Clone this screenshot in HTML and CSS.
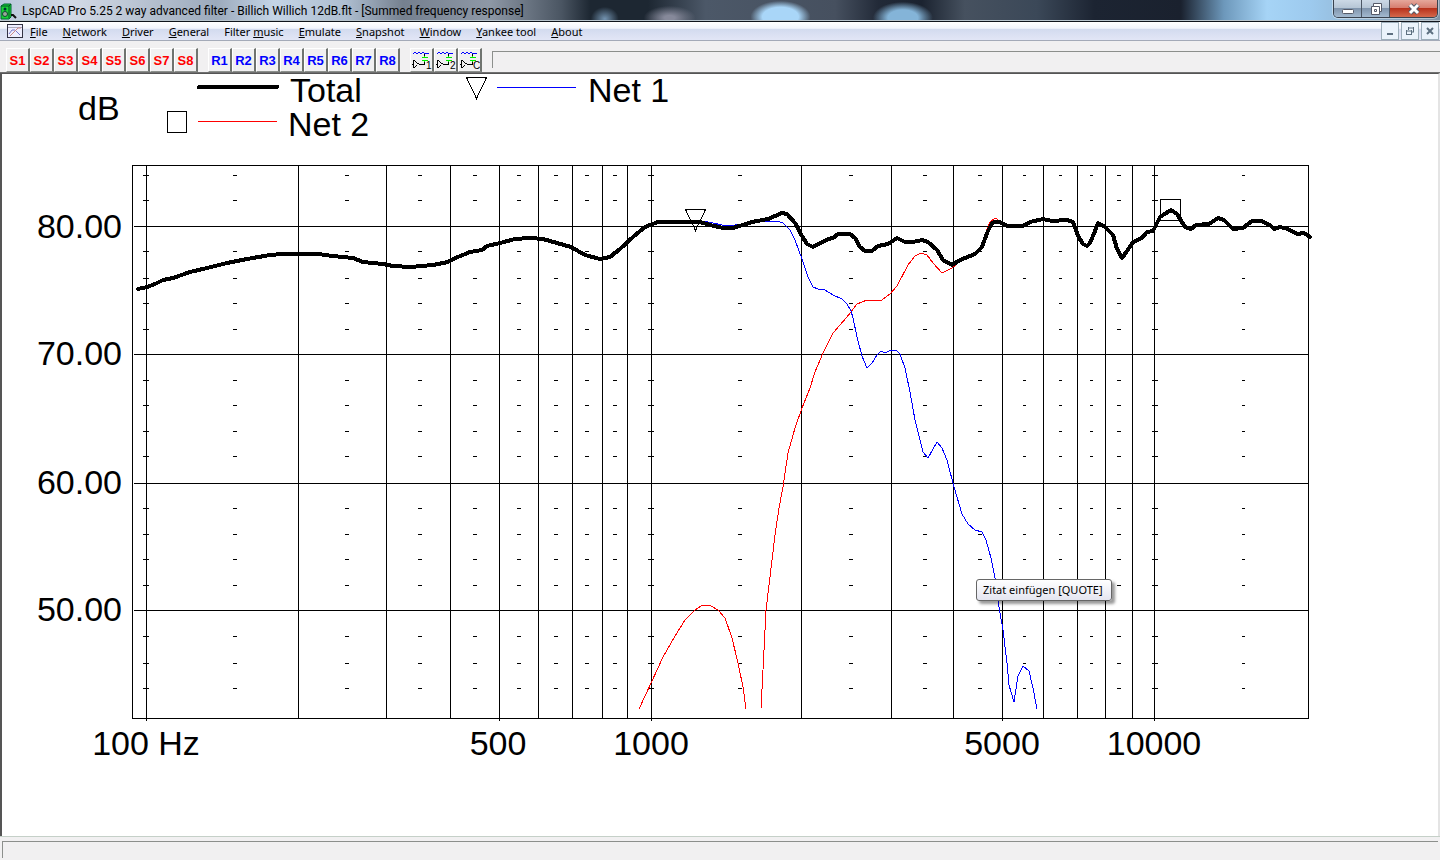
FILE: index.html
```html
<!DOCTYPE html>
<html lang="en">
<head>
  <meta charset="UTF-8">
  <meta name="viewport" content="width=device-width, initial-scale=1">
  <title>LspCAD Pro 5.25</title>
  <link rel="stylesheet" href="styles.css">
</head>
<body>
  <header class="titlebar">
    <svg class="app-icon" width="18" height="20" viewBox="0 0 18 20">
      <path d="M1 5l3-2h7v13l-2 2H1z" fill="#19d136" stroke="#063" />
      <path d="M9 5v12M1 5h8l2-2" fill="none" stroke="#052" />
      <circle cx="5" cy="8" r="1.5" fill="#033" />
      <circle cx="5" cy="13" r="2.5" fill="#9a9" stroke="#143" />
      <path d="M11 14h2l3 3" fill="none" stroke="#111" stroke-width="2" />
    </svg>
    <h1>LspCAD Pro 5.25 2 way advanced filter - Billich Willich 12dB.flt - [Summed frequency response]</h1>
    <div class="window-controls">
      <button class="min" aria-label="Minimize"><svg width="14" height="12"><rect x="1.500" y="6.500" width="11" height="4" rx="1" fill="#fff" stroke="#555a68" /></svg></button>
      <button class="restore" aria-label="Restore"><svg width="14" height="14"><path d="M4.500 1.500h8v8h-2v3h-8v-8h2z" fill="#fff" stroke="#555a68" /><path d="M4.500 4.500h6v6M5.500 7.500h2v2h-2z" fill="none" stroke="#555a68" /></svg></button>
      <button class="close" aria-label="Close"><svg width="14" height="12"><path d="M3 2l8 8M11 2l-8 8" stroke="#555a68" stroke-width="5" /><path d="M3 2l8 8M11 2l-8 8" stroke="#fff" stroke-width="3" /></svg></button>
    </div>
  </header>

  <nav class="menubar">
    <svg class="doc-icon" width="16" height="14" viewBox="0 0 16 14">
      <rect x=".5" y=".5" width="15" height="13" fill="#eef" stroke="#334" />
      <path d="M1 3.500h14" stroke="#aab" />
      <path d="M2 10l3-4h3l5 5" fill="none" stroke="#77c" />
      <path d="M3 12l8-8h3" fill="none" stroke="#c88" />
    </svg>
    <ul class="menu">
      <li><a href="#file"><u>F</u>ile</a></li>
      <li><a href="#network"><u>N</u>etwork</a></li>
      <li><a href="#driver"><u>D</u>river</a></li>
      <li><a href="#general"><u>G</u>eneral</a></li>
      <li><a href="#music">Filter <u>m</u>usic</a></li>
      <li><a href="#emulate"><u>E</u>mulate</a></li>
      <li><a href="#snapshot"><u>S</u>napshot</a></li>
      <li><a href="#window"><u>W</u>indow</a></li>
      <li><a href="#yankee"><u>Y</u>ankee tool</a></li>
      <li><a href="#about"><u>A</u>bout</a></li>
    </ul>
    <div class="child-controls">
      <button aria-label="Minimize document"><svg width="10" height="10"><path d="M2 8h6" stroke="#5d7080" stroke-width="2" /></svg></button>
      <button aria-label="Restore document"><svg width="10" height="10"><path d="M3 2h6M3.500 1v3M8.500 1v5M6 6h3M1 5h6M1.500 4v5M6.500 4v5M1 8.500h6" fill="none" stroke="#5d7080" /></svg></button>
      <button aria-label="Close document"><svg width="10" height="10"><path d="M2 2l6 6M8 2l-6 6" stroke="#5d7080" stroke-width="2" /></svg></button>
    </div>
  </nav>

  <div class="toolbar">
    <div class="tool-group save">
      <button>S1</button><button>S2</button><button>S3</button><button>S4</button><button>S5</button><button>S6</button><button>S7</button><button>S8</button>
    </div>
    <div class="tool-group recall">
      <button>R1</button><button>R2</button><button>R3</button><button>R4</button><button>R5</button><button>R6</button><button>R7</button><button>R8</button>
    </div>
    <div class="tool-group nets">
      <button aria-label="Network 1"><svg width="20" height="20"><use href="#net" /><text x="14" y="19">1</text></svg></button>
      <button aria-label="Network 2"><svg width="20" height="20"><use href="#net" /><text x="14" y="19">2</text></svg></button>
      <button aria-label="Network C"><svg width="20" height="20"><use href="#net" /><text x="13" y="19">C</text></svg></button>
    </div>
    <div class="tool-well"></div>
  </div>

  <main class="chart">
    <svg class="plot" viewBox="2 74 1436 762" role="img" aria-label="Summed frequency response">
      <defs>
        <g id="net" fill="none" shape-rendering="crispEdges">
          <path d="M1 3.500h1M2 2.500h2M4 3.500h2M6 2.500h2M8 3.500h2M10 2.500h2M12 3.500h5" stroke="#00f" />
          <path d="M12.500 4v3M12.500 11v4" stroke="#000" />
          <path d="M10 7.500h6M10 10.500h6M12.500 6v2M12.500 10v2" stroke="#0e0" />
          <path d="M1.500 10v8M2 10.500h1M3 11.500h1M4 12.500h1M5 13.500h2M4 15.500h1M3 16.500h1M2 17.500h1M7 14.500h5M0 14.500h1" stroke="#000" />
        </g>
        <path id="ticks" d="M143 .5h6M233 .5h4M345 .5h4M418 .5h4M473 .5h4M517 .5h4M554 .5h4M585 .5h4M613 .5h4M648 .5h6M738 .5h4M849 .5h4M923 .5h4M978 .5h4M1023 .5h3M1059 .5h3M1090 .5h3M1117 .5h4M1152 .5h6M1242 .5h3" />
      </defs>

      <g class="grid">
        <rect x="132.500" y="165.500" width="1176" height="553" />
        <path d="M134 226.500h1174M134 354.500h1174M134 483.500h1174M134 610.500h1174" />
        <path d="M146.500 165v556M298.500 165v553M386.500 165v553M450.500 165v553M499.500 165v556M538.500 165v553M572.500 165v553M602.500 165v553M627.500 165v553M651.500 165v556M801.500 165v553M891.500 165v553M953.500 165v553M1002.500 165v556M1043.500 165v553M1077.500 165v553M1105.500 165v553M1132.500 165v553M1154.500 165v556" />
        <use href="#ticks" y="175" /><use href="#ticks" y="200" />
        <use href="#ticks" y="251" /><use href="#ticks" y="278" /><use href="#ticks" y="303" /><use href="#ticks" y="329" />
        <use href="#ticks" y="380" /><use href="#ticks" y="405" /><use href="#ticks" y="431" /><use href="#ticks" y="456" />
        <use href="#ticks" y="508" /><use href="#ticks" y="534" /><use href="#ticks" y="559" /><use href="#ticks" y="585" />
        <use href="#ticks" y="636" /><use href="#ticks" y="663" /><use href="#ticks" y="688" />
      </g>

      <g class="curve net2">
        <polyline points="639,709 652,681 663,657 675,636 685,620 695,610 701,606 706,605 711,606 718,610 725,618 732,638 738,663 743,687 746,709" />
        <polyline points="761,709 764,650 766,610 772,560 775,535 779,508 783,487 788,453 795,428 802,408 810,388 815,372 823,353 833,333 847,317 857,304 867,300 882,300 890,294 897,286 908,265 915,256 921,253 927,255 933,263 942,273 950,269 955,266 960,260 975,254 982,247 986,232 990,222 995,218 1000,221 1006,224 1012,226" />
      </g>
      <g class="curve net1">
        <polyline points="695,221 702,221 713,223 722,225 735,225 747,223 767,221 777,221 783,223 790,230 795,240 802,259 808,277 813,287 818,289 825,290 833,295 842,299 847,304 851,311 853,318 857,337 862,356 867,368 872,363 877,355 881,351 885,353 891,350 896,350 900,354 905,368 910,392 915,420 923,452 928,458 937,442 942,448 947,460 954,487 962,514 968,524 975,530 982,532 986,540 991,558 995,578 999,607 1003,630 1007,663 1009,685 1014,702 1018,676 1023,666 1029,671 1033,688 1037,709" />
      </g>
      <g class="curve total">
        <polyline points="138,289 147,287 155,284 163,280 173,278 190,272 207,268 227,263 247,259 270,255 283,254 318,254 333,256 353,258 363,262 383,264 393,266 410,267 433,265 448,262 453,259 470,252 482,250 487,246 500,243 515,239 530,238 543,239 557,243 571,247 585,255 600,259 610,257 620,249 633,237 645,227 658,222 700,222 710,225 723,228 733,228 752,222 768,219 782,213 787,214 795,223 802,236 807,244 813,247 828,239 833,238 838,234 850,234 855,238 860,247 865,251 872,251 878,246 888,244 897,238 905,242 913,242 922,240 928,242 937,250 943,260 952,265 960,260 975,254 982,247 987,233 992,223 995,222 1000,222 1007,226 1023,226 1030,222 1043,219 1052,221 1067,220 1073,222 1078,236 1083,244 1087,246 1090,243 1095,231 1098,223 1105,227 1113,235 1117,249 1122,258 1127,251 1133,242 1142,238 1147,232 1153,231 1160,217 1171,210 1177,214 1185,227 1191,229 1196,225 1209,224 1218,218 1224,220 1233,229 1243,228 1252,221 1261,221 1270,225 1274,229 1280,227 1288,229 1297,234 1304,233 1310,237" />
      </g>

      <g class="marker">
        <path d="M685.500 209.500h20l-10 21z" />
        <rect x="1160.500" y="199.500" width="20" height="21" />
        <path d="M466.500 77.500h20l-10 21z" />
        <rect x="167.500" y="111.500" width="19" height="21" />
      </g>

      <!-- legend -->
      <path class="curve total" d="M199 87h78" />
      <path class="curve net1" d="M497 87.500h79" />
      <path class="curve net2" d="M198 121.500h79" />
      <g class="label">
        <text x="290" y="102">Total</text>
        <text x="588" y="102">Net 1</text>
        <text x="288" y="136">Net 2</text>
        <text x="78" y="120">dB</text>
      </g>
      <g class="label y-axis">
        <text x="122" y="238">80.00</text>
        <text x="122" y="365">70.00</text>
        <text x="122" y="494">60.00</text>
        <text x="122" y="621">50.00</text>
      </g>
      <g class="label x-axis">
        <text x="146" y="755">100 Hz</text>
        <text x="498" y="755">500</text>
        <text x="651" y="755">1000</text>
        <text x="1002" y="755">5000</text>
        <text x="1154" y="755">10000</text>
      </g>
    </svg>
    <div class="tooltip" role="tooltip">Zitat einfügen [QUOTE]</div>
  </main>

  <footer class="statusbar"><div class="status-well"></div></footer>
</body>
</html>
```
FILE: styles.css
```css
:root {
  --face: #f1f0f1;
  --shadow: #8c8f8c;
  --ui: "Noto Sans", "Open Sans", sans-serif;
}
* { margin: 0; padding: 0; box-sizing: border-box; }
body {
  display: flex;
  flex-direction: column;
  height: 100vh;
  overflow: hidden;
  background: var(--face);
  color: #000;
  font-family: var(--ui);
  font-size: 11px;
}
button { border: none; background: none; font: inherit; }
svg { display: block; }

/* title bar */
.titlebar {
  display: flex;
  align-items: center;
  height: 22px;
  padding-right: 2px;
  border-bottom: 1px solid #10151c;
  box-shadow: inset 0 -1px #b8c4cc;
  background:
    radial-gradient(ellipse 30px 16px at 54.200% 80%, #a9d6f8 60%, transparent),
    radial-gradient(ellipse 30px 16px at 62.700% 85%, #84b4d8 50%, transparent),
    radial-gradient(ellipse 26px 12px at 46.500% 85%, #86899a 20%, transparent),
    radial-gradient(ellipse 14px 12px at 42% 90%, #7393b0, transparent),
    linear-gradient(90deg, #b9c8dc 0, #d3dae6 5%, #9caabc 15%, #c4d4e6 19%, #aebed0 24%, #75808f 28%, #8e98a6 34%, #4a5562 39%, #1d2732 41%, #1d2732 45%, #4c5868 49%, #46505f 58%, #222a38 61%, #1b2330 64%, #46515f 67%, #3b4858 72%, #1c2432 76%, #1a212e 82%, #6d98bb 85%, #a6d4f6 88%, #9dcaee 91%, #8095a8 100%);
}
.titlebar h1 { flex: 1; font: 400 12px/20px Roboto, var(--ui); white-space: nowrap; }
.app-icon { margin-right: 4px; }
.window-controls {
  display: flex;
  align-self: flex-start;
  height: 18px;
  border: 1px solid #39424e;
  border-top: none;
  border-radius: 0 0 5px 5px;
  overflow: hidden;
  box-shadow: 0 0 0 1px rgba(255,255,255,0.4);
}
.window-controls button {
  display: flex;
  align-items: center;
  justify-content: center;
  width: 28px;
  border-right: 1px solid #4b5664;
  background: linear-gradient(#ccd9e6 0, #b4c4d4 50%, #8095ad 50%, #a3b9cf 100%);
}
.window-controls .close { width: 47px; border: none; background: linear-gradient(#e5a79b 0, #d5796a 50%, #b8321c 50%, #d4684c 100%); }

/* menu */
.menubar {
  display: flex;
  align-items: center;
  height: 19px;
  padding: 0 1px 0 7px;
  border-bottom: 1px solid #a4aab8;
  background: linear-gradient(#fff 0, #f2f5fc 35%, #d3dbef 40%, #e2e6f6 100%);
}
.menu { flex: 1; display: flex; gap: 15px; margin-left: 7px; list-style: none; }
.menu a { color: #000; text-decoration: none; white-space: nowrap; }
.child-controls { display: flex; gap: 2px; }
.child-controls button {
  display: flex;
  align-items: center;
  justify-content: center;
  width: 18px;
  height: 18px;
  border: 1px solid #9dafba;
  background: #eaf3fb;
}

/* toolbar */
.toolbar { display: flex; height: 32px; padding: 7px 0 0 6px; border-bottom: 1px solid #707070; }
.tool-group { display: flex; margin-right: 10px; }
.tool-group button {
  display: flex;
  align-items: center;
  justify-content: center;
  width: 24px;
  height: 24px;
  border: 1px solid #fff;
  border-right: 2px solid #6f736f;
  border-bottom: 1px solid #8c908c;
  font: bold 13px "Liberation Sans", Arial, sans-serif;
}
.save button { color: #f00; }
.recall button { color: #00f; }
.nets text { font: 10px "Liberation Sans", Arial, sans-serif; }
.tool-well { flex: 1; margin: 3px 0 4px; border: 1px solid var(--shadow); border-width: 1px 0 0 1px; }

/* chart */
.chart {
  position: relative;
  flex: 1;
  min-height: 0;
  border-left: 2px solid #555;
  border-right: 2px solid #e4e4e4;
  border-top: 1px solid #555;
  background: #fff;
}
.plot { width: 100%; height: 100%; overflow: visible; }
.grid { fill: none; stroke: #000; shape-rendering: crispEdges; }
.curve { fill: none; stroke-width: 1; shape-rendering: crispEdges; }
.total { stroke: #000; stroke-width: 4; stroke-linecap: round; stroke-linejoin: round; }
.net1 { stroke: #00f; }
.net2 { stroke: #f00; }
.marker { fill: none; stroke: #000; shape-rendering: crispEdges; }
.label { font: 34px "Liberation Sans", Arial, sans-serif; }
.y-axis { text-anchor: end; }
.x-axis { text-anchor: middle; }
.tooltip {
  position: absolute;
  left: 974px;
  top: 505px;
  padding: 0 8px 0 6px;
  border: 1px solid #666;
  border-radius: 3px;
  background: linear-gradient(#fff, #e4e5f0);
  box-shadow: 3px 3px 3px rgba(0,0,0,0.4);
  line-height: 20px;
  white-space: nowrap;
}

/* status bar */
.statusbar { height: 24px; padding: 4px 2px 2px; border-top: 1px solid #c5d0c8; }
.status-well { height: 100%; border: 1px solid var(--shadow); border-width: 1px 0 0 1px; }
```
